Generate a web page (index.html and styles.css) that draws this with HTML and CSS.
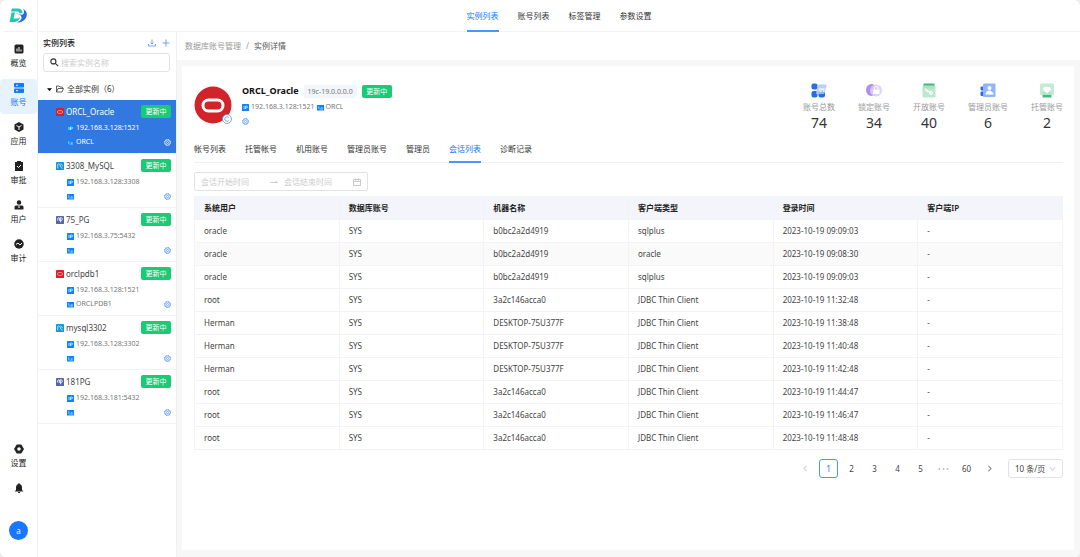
FILE: index.html
```html
<!DOCTYPE html>
<html lang="zh-CN">
<head>
  <meta charset="utf-8">
  <title>数据库账号管理</title>
  <link rel="stylesheet" href="styles.css">
</head>
<body>
<svg class="sprite" aria-hidden="true">
  <symbol id="i-ip" viewBox="0 0 14 14">
    <rect width="14" height="14" rx="1" fill="#0a84ff"/>
    <path d="M4 4v6M7 10V4h2.2a1.8 1.8 0 0 1 0 3.6H7" fill="none" stroke="#fff" stroke-width="1.4"/>
  </symbol>
  <symbol id="i-sid" viewBox="0 0 14 14">
    <path d="M0 2h14v11H0z" fill="#0a84ff"/>
    <path d="M2 5l2.5 2L2 9M5 10h7M8 7.5h3" fill="none" stroke="#fff" stroke-width="1.2"/>
  </symbol>
  <symbol id="i-gear" viewBox="0 0 14 14">
    <circle cx="7" cy="7" r="5.3" fill="none" stroke="currentColor" stroke-width="1.3"/>
    <circle cx="7" cy="7" r="6.2" fill="none" stroke="currentColor" stroke-width="1.5" stroke-dasharray="2.4 2.47"/>
    <circle cx="7" cy="7" r="2.2" fill="none" stroke="currentColor" stroke-width="1.3"/>
  </symbol>
  <symbol id="i-oracle" viewBox="0 0 14 14">
    <rect width="14" height="14" rx="1.5" fill="#d2232a"/>
    <rect x="2.5" y="4.5" width="9" height="5" rx="2.5" fill="none" stroke="#f4b6b8" stroke-width="1.2"/>
  </symbol>
  <symbol id="i-mysql" viewBox="0 0 14 14">
    <rect width="14" height="14" rx="1.5" fill="#1296db"/>
    <path d="M3 11V4c2-2 4 0 4.500 2.500S9 10 11.500 11M8 3.500c2 0 3 2 3 4" fill="none" stroke="#fff" stroke-width="1.2"/>
  </symbol>
  <symbol id="i-pg" viewBox="0 0 14 14">
    <rect width="14" height="14" rx="1.5" fill="#5467a5"/>
    <path d="M3 8V4.500C3 2.500 6 3 6 4v4.500M6 4c1-1.500 5-1.500 5 1 0 2-1 3-1.500 3H8M8 4v7" fill="none" stroke="#fff" stroke-width="1.5"/>
  </symbol>
</svg>

<div class="app">
  <nav class="sidebar">
    <a class="logo" href="#" aria-label="首页">
      <svg viewBox="0 0 38 32">
        <path d="M6 1h12c6 0 9 4 9 9l-6 1c-1-3-3-4-5-4H4z" fill="#28c5b4"/>
        <path d="M5 9h7l-3 12h6c3 0 5-1 7-3-1 7-6 10-13 10H1z" fill="#28c5b4"/>
        <path d="M14 11c6-1 8 4 13 2 4-2 4-7 1-11 7 3 9 9 7 15-3 8-10 12-19 12 6-3 9-6 9-10 0-5-5-6-11-8z" fill="#2b6de0"/>
      </svg>
    </a>
    <a class="nav-item" href="#">
      <svg viewBox="0 0 20 20"><rect x="1" y="1" width="18" height="18" rx="3"/><path class="cut" d="M6 9v6M10 6v9M14 11v4"/></svg>
      <span>概览</span>
    </a>
    <a class="nav-item active" href="#">
      <svg viewBox="0 0 20 20"><rect x="0" y="0" width="20" height="9" rx="1.5"/><rect x="0" y="11" width="20" height="9" rx="1.5"/><path class="cut" d="M4 4.500h4M4 15.500h4"/></svg>
      <span>账号</span>
    </a>
    <a class="nav-item" href="#">
      <svg viewBox="0 0 20 20"><path d="M10 0l9 5v10l-9 5-9-5V5z"/><path class="cut" d="M5 7l5 3 5-3M10 10v6"/></svg>
      <span>应用</span>
    </a>
    <a class="nav-item" href="#">
      <svg viewBox="0 0 20 20"><path d="M2 2h4V0h8v2h4v18H2z"/><path class="cut" d="M6 10l3 3 5-5"/></svg>
      <span>审批</span>
    </a>
    <a class="nav-item" href="#">
      <svg viewBox="0 0 20 20"><circle cx="10" cy="5" r="4.5"/><path d="M1 19v-5q0-3 3-3h12q3 0 3 3v5z"/><path class="cut" d="M10 11v5"/></svg>
      <span>用户</span>
    </a>
    <a class="nav-item" href="#">
      <svg viewBox="0 0 20 20"><circle cx="10" cy="10" r="9.5"/><path class="cut" d="M4 11l4-3 4 4 4-4"/></svg>
      <span>审计</span>
    </a>
    <div class="nav-bottom">
      <a class="nav-item" href="#">
        <svg viewBox="0 0 20 20"><path d="M5.500 1h9L20 10l-5.500 9h-9L0 10z"/><circle cx="10" cy="10" r="3.6" fill="#fff"/></svg>
        <span>设置</span>
      </a>
      <button class="bell" aria-label="通知">
        <svg viewBox="0 0 20 20"><path d="M9 0h2v2c4 1 5 4 5 7v5l3 3H1l3-3V9c0-3 1-6 5-7zM8 18h4v2H8z"/></svg>
      </button>
      <button class="avatar">a</button>
    </div>
  </nav>

  <div class="page">
    <header class="topbar">
      <a class="tab active" href="#">实例列表</a>
      <a class="tab" href="#">账号列表</a>
      <a class="tab" href="#">标签管理</a>
      <a class="tab" href="#">参数设置</a>
    </header>

    <div class="body">
      <aside class="tree">
        <div class="tree-head">
          <h2>实例列表</h2>
          <button aria-label="导出"><svg viewBox="0 0 16 16"><path d="M1 10v4h14v-4M8 1v9M5 7l3 3 3-3"/></svg></button>
          <button aria-label="新增"><svg viewBox="0 0 16 16"><path d="M8 1v14M1 8h14"/></svg></button>
        </div>
        <label class="search">
          <svg viewBox="0 0 16 16"><circle cx="6" cy="6" r="4.5"/><path d="M9.500 9.500l5 5"/></svg>
          <input type="text" placeholder="搜索实例名称" aria-label="搜索实例名称">
        </label>
        <div class="tree-root">
          <svg class="caret" viewBox="0 0 8 8"><path d="M0 2h8L4 6.500z"/></svg>
          <svg class="folder" viewBox="0 0 16 16"><path d="M1 14V2h5l2 2h5v3M1 14l3-7h11l-3 7z"/></svg>
          <span>全部实例（6）</span>
        </div>
        <ul class="instances">
          <li class="instance selected">
            <div class="row name"><svg><use href="#i-oracle"/></svg><a href="#">ORCL_Oracle</a><span class="badge">更新中</span></div>
            <div class="row sub"><svg><use href="#i-ip"/></svg>192.168.3.128:1521</div>
            <div class="row sub"><svg><use href="#i-sid"/></svg>ORCL<button class="gear" aria-label="设置"><svg><use href="#i-gear"/></svg></button></div>
          </li>
          <li class="instance">
            <div class="row name"><svg><use href="#i-mysql"/></svg><a href="#">3308_MySQL</a><span class="badge">更新中</span></div>
            <div class="row sub"><svg><use href="#i-ip"/></svg>192.168.3.128:3308</div>
            <div class="row sub"><svg><use href="#i-sid"/></svg><button class="gear" aria-label="设置"><svg><use href="#i-gear"/></svg></button></div>
          </li>
          <li class="instance">
            <div class="row name"><svg><use href="#i-pg"/></svg><a href="#">75_PG</a><span class="badge">更新中</span></div>
            <div class="row sub"><svg><use href="#i-ip"/></svg>192.168.3.75:5432</div>
            <div class="row sub"><svg><use href="#i-sid"/></svg><button class="gear" aria-label="设置"><svg><use href="#i-gear"/></svg></button></div>
          </li>
          <li class="instance">
            <div class="row name"><svg><use href="#i-oracle"/></svg><a href="#">orclpdb1</a><span class="badge">更新中</span></div>
            <div class="row sub"><svg><use href="#i-ip"/></svg>192.168.3.128:1521</div>
            <div class="row sub"><svg><use href="#i-sid"/></svg>ORCLPDB1<button class="gear" aria-label="设置"><svg><use href="#i-gear"/></svg></button></div>
          </li>
          <li class="instance">
            <div class="row name"><svg><use href="#i-mysql"/></svg><a href="#">mysql3302</a><span class="badge">更新中</span></div>
            <div class="row sub"><svg><use href="#i-ip"/></svg>192.168.3.128:3302</div>
            <div class="row sub"><svg><use href="#i-sid"/></svg><button class="gear" aria-label="设置"><svg><use href="#i-gear"/></svg></button></div>
          </li>
          <li class="instance">
            <div class="row name"><svg><use href="#i-pg"/></svg><a href="#">181PG</a><span class="badge">更新中</span></div>
            <div class="row sub"><svg><use href="#i-ip"/></svg>192.168.3.181:5432</div>
            <div class="row sub"><svg><use href="#i-sid"/></svg><button class="gear" aria-label="设置"><svg><use href="#i-gear"/></svg></button></div>
          </li>
        </ul>
      </aside>

      <main class="main">
        <div class="breadcrumb"><a href="#">数据库账号管理</a><span>/</span><span class="current">实例详情</span></div>

        <section class="card">
          <div class="detail">
            <div class="db-logo">
              <svg viewBox="0 0 38 38"><circle cx="19" cy="19" r="18.5" fill="#d2232a"/><rect x="9" y="14" width="20" height="11" rx="5.5" fill="none" stroke="#fff" stroke-width="3"/></svg>
              <svg class="mark" viewBox="0 0 20 20"><circle cx="10" cy="10" r="9" fill="#fff" stroke="#4a8af4" stroke-width="1.5"/><path d="M13.500 7A4.500 4.500 0 1 0 13.500 13" fill="none" stroke="#4a8af4" stroke-width="1.5"/></svg>
            </div>
            <div class="info">
              <div class="info-title"><h1>ORCL_Oracle</h1><span class="version">19c-19.0.0.0.0</span><span class="badge">更新中</span></div>
              <div class="info-sub"><svg><use href="#i-ip"/></svg><span>192.168.3.128:1521</span><svg><use href="#i-sid"/></svg><span>ORCL</span></div>
              <button class="gear" aria-label="设置"><svg><use href="#i-gear"/></svg></button>
            </div>
            <dl class="stats">
              <div>
                <svg viewBox="0 0 32 30"><rect x="1" y="1" width="12" height="12" rx="4" fill="#2b6de0"/><rect x="1" y="16" width="12" height="13" rx="4" fill="#2b6de0"/><rect x="15" y="16" width="13" height="13" rx="4" fill="#2b6de0"/><path d="M13 3h17q2 0 1 3l-4 14q-1 2-3 2H10z" fill="#a9c8fa" opacity=".85"/><path d="M15 12h12M17 16h4M24 16h3" stroke="#fff" stroke-width="2.5"/></svg>
                <dt>账号总数</dt><dd>74</dd>
              </div>
              <div>
                <svg viewBox="0 0 32 30"><ellipse cx="11" cy="14" rx="11" ry="12" fill="#b28df0"/><circle cx="20" cy="15" r="12" fill="#dccdfb" opacity=".9"/><rect x="14" y="13" width="13" height="9" rx="1" fill="#fff"/><path d="M17 13v-3a3.500 3.500 0 0 1 7 0v3" fill="none" stroke="#fff" stroke-width="2"/></svg>
                <dt>锁定账号</dt><dd>34</dd>
              </div>
              <div>
                <svg viewBox="0 0 32 30"><rect x="5" y="1" width="22" height="10" rx="1" fill="#45b97c"/><rect x="3" y="5" width="26" height="24" rx="3" fill="#b4e6ca" opacity=".9"/><path d="M10 11a5 5 0 0 0 6 6l4 5" fill="none" stroke="#fff" stroke-width="3"/><circle cx="20" cy="20" r="3" fill="none" stroke="#fff" stroke-width="2"/></svg>
                <dt>开放账号</dt><dd>40</dd>
              </div>
              <div>
                <svg viewBox="0 0 32 30"><rect x="1" y="7" width="9" height="8" rx="2" fill="#2b6de0"/><rect x="1" y="17" width="9" height="9" rx="2" fill="#2b6de0"/><rect x="6" y="1" width="25" height="27" rx="2" fill="#8eb6f8"/><circle cx="19" cy="10" r="4" fill="#fff"/><path d="M11 22q1-7 8-7 4 0 5 3l3 2v3H11z" fill="#fff"/></svg>
                <dt>管理员账号</dt><dd>6</dd>
              </div>
              <div>
                <svg viewBox="0 0 32 30"><rect x="7" y="18" width="18" height="11" rx="1" fill="#45b97c"/><rect x="2" y="1" width="28" height="23" rx="3" fill="#bde9d0" opacity=".9"/><path d="M11 8h10l4 4-9 9-9-9z" fill="#fff"/></svg>
                <dt>托管账号</dt><dd>2</dd>
              </div>
            </dl>
          </div>

          <nav class="tabs">
            <a class="tab" href="#">帐号列表</a>
            <a class="tab" href="#">托管帐号</a>
            <a class="tab" href="#">机用账号</a>
            <a class="tab" href="#">管理员账号</a>
            <a class="tab" href="#">管理员</a>
            <a class="tab active" href="#">会话列表</a>
            <a class="tab" href="#">诊断记录</a>
          </nav>

          <div class="range">
            <input type="text" placeholder="会话开始时间" aria-label="会话开始时间">
            <svg class="arrow" viewBox="0 0 16 16"><path d="M1 9h14l-4-3"/></svg>
            <input type="text" placeholder="会话结束时间" aria-label="会话结束时间">
            <svg viewBox="0 0 16 16"><path d="M1 3h14v12H1zM1 7h14M5 1v4M11 1v4"/></svg>
          </div>

          <table class="sessions">
            <thead>
              <tr><th>系统用户</th><th>数据库账号</th><th>机器名称</th><th>客户端类型</th><th>登录时间</th><th>客户端IP</th></tr>
            </thead>
            <tbody>
              <tr><td>oracle</td><td>SYS</td><td>b0bc2a2d4919</td><td>sqlplus</td><td>2023-10-19 09:09:03</td><td>-</td></tr>
              <tr class="hover"><td>oracle</td><td>SYS</td><td>b0bc2a2d4919</td><td>oracle</td><td>2023-10-19 09:08:30</td><td>-</td></tr>
              <tr><td>oracle</td><td>SYS</td><td>b0bc2a2d4919</td><td>sqlplus</td><td>2023-10-19 09:09:03</td><td>-</td></tr>
              <tr><td>root</td><td>SYS</td><td>3a2c146acca0</td><td>JDBC Thin Client</td><td>2023-10-19 11:32:48</td><td>-</td></tr>
              <tr><td>Herman</td><td>SYS</td><td>DESKTOP-75U377F</td><td>JDBC Thin Client</td><td>2023-10-19 11:38:48</td><td>-</td></tr>
              <tr><td>Herman</td><td>SYS</td><td>DESKTOP-75U377F</td><td>JDBC Thin Client</td><td>2023-10-19 11:40:48</td><td>-</td></tr>
              <tr><td>Herman</td><td>SYS</td><td>DESKTOP-75U377F</td><td>JDBC Thin Client</td><td>2023-10-19 11:42:48</td><td>-</td></tr>
              <tr><td>root</td><td>SYS</td><td>3a2c146acca0</td><td>JDBC Thin Client</td><td>2023-10-19 11:44:47</td><td>-</td></tr>
              <tr><td>root</td><td>SYS</td><td>3a2c146acca0</td><td>JDBC Thin Client</td><td>2023-10-19 11:46:47</td><td>-</td></tr>
              <tr><td>root</td><td>SYS</td><td>3a2c146acca0</td><td>JDBC Thin Client</td><td>2023-10-19 11:48:48</td><td>-</td></tr>
            </tbody>
          </table>

          <div class="pagination">
            <button class="muted" aria-label="上一页"><svg viewBox="0 0 16 16"><path d="M11 2L4 8l7 6"/></svg></button>
            <button class="current">1</button>
            <button>2</button>
            <button>3</button>
            <button>4</button>
            <button>5</button>
            <button class="muted" aria-label="更多页"><svg class="dots" viewBox="0 0 24 8"><circle cx="3" cy="4" r="2"/><circle cx="12" cy="4" r="2"/><circle cx="21" cy="4" r="2"/></svg></button>
            <button>60</button>
            <button aria-label="下一页"><svg viewBox="0 0 16 16"><path d="M5 2l7 6-7 6"/></svg></button>
            <label class="page-size">
              <select aria-label="每页条数"><option>10 条/页</option><option>20 条/页</option></select>
              <svg viewBox="0 0 16 16"><path d="M2 5l6 7 6-7"/></svg>
            </label>
          </div>
        </section>
      </main>
    </div>
  </div>
</div>
</body>
</html>
```

FILE: styles.css
```css
* {
  box-sizing: border-box;
}

body {
  margin: 0;
  background: #ececec;
  color: #444;
  font: 8px/12px "Noto Sans", "Noto Sans CJK SC", sans-serif;
}

a {
  color: inherit;
  text-decoration: none;
}

button, input, select {
  margin: 0;
  padding: 0;
  border: 0;
  background: none;
  color: inherit;
  font: inherit;
}

button {
  display: flex;
  align-items: center;
  justify-content: center;
}

h1, h2, ul, dl, dd {
  margin: 0;
  padding: 0;
}

svg {
  display: block;
  flex: none;
}

.sprite {
  position: absolute;
  width: 0;
  height: 0;
}

.app {
  display: flex;
  min-height: 100vh;
  border-radius: 6px;
  overflow: hidden;
  background: #fff;
}

/* left navigation */
.sidebar {
  display: flex;
  flex-direction: column;
  gap: 4px;
  flex: none;
  width: 38px;
  border-right: 1px solid #f0f0f2;
}

.logo {
  display: flex;
  align-items: center;
  justify-content: center;
  height: 32px;
  margin: 0 4px 4px;
  border-bottom: 1px solid #f0f0f2;
}

.logo svg {
  width: 19px;
  height: 16px;
}

.nav-item {
  display: flex;
  flex-direction: column;
  align-items: center;
  gap: 3px;
  height: 35px;
  padding-top: 4px;
  border-radius: 4px;
  color: #222;
}

.nav-item svg, .bell svg {
  width: 10px;
  height: 10px;
  fill: currentColor;
}

.nav-item .cut {
  fill: none;
  stroke: #fff;
  stroke-width: 2;
}

.nav-item.active {
  background: #e6f3ff;
  color: #1677ff;
}

.nav-bottom {
  display: flex;
  flex-direction: column;
  gap: 4px;
  margin-top: auto;
  padding-bottom: 17px;
}

.bell {
  height: 18px;
  color: #222;
}

.avatar {
  width: 19px;
  height: 19px;
  margin: 20px auto 0;
  border-radius: 50%;
  background: #1677ff;
  color: #fff;
}

/* top tabs */
.page {
  display: flex;
  flex-direction: column;
  flex: 1;
  min-width: 0;
}

.topbar {
  display: flex;
  justify-content: center;
  gap: 19px;
  height: 32px;
  border-bottom: 1px solid #f3f3f5;
}

.tab {
  color: #333;
}

.tab.active {
  border-bottom: 2px solid #4a96ff;
  color: #1677ff;
}

.topbar .tab {
  height: 32px;
  line-height: 32px;
}

.body {
  display: flex;
  flex: 1;
}

/* instance tree */
.tree {
  flex: none;
  width: 139px;
  border-right: 1px solid #f0f0f2;
}

.tree-head {
  display: flex;
  align-items: center;
  gap: 6px;
  height: 21px;
  padding: 0 6px 0 5px;
}

.tree-head h2 {
  flex: 1;
  color: #222;
  font-size: 8px;
  font-weight: 500;
}

.tree-head svg {
  width: 8px;
  height: 8px;
  fill: none;
  stroke: #4a8af4;
  stroke-width: 1.5;
}

.search {
  display: flex;
  align-items: center;
  gap: 2px;
  height: 19px;
  margin: 0 6px 0 5px;
  padding: 0 6px;
  border: 1px solid #e2e2e4;
  border-radius: 3px;
}

.search svg {
  width: 9px;
  height: 9px;
  fill: none;
  stroke: #333;
  stroke-width: 2;
}

input::placeholder {
  color: #ccc;
  opacity: 1;
}

.search input {
  flex: 1;
  min-width: 0;
}

.tree-root {
  display: flex;
  align-items: center;
  height: 28px;
  padding: 6px 0 0 9px;
  color: #333;
}

.caret {
  width: 5px;
  height: 5px;
  margin-right: 4px;
}

.folder {
  width: 8px;
  height: 8px;
  margin-right: 3px;
  fill: none;
  stroke: #333;
  stroke-width: 1.5;
}

.instances {
  list-style: none;
}

.instance {
  display: flex;
  flex-direction: column;
  padding: 5px 5px 4px 18px;
  border-bottom: 1px solid #f3f3f5;
}

.row {
  display: flex;
  align-items: center;
  height: 14px;
}

.name {
  gap: 2px;
  height: 13px;
  margin-bottom: 3px;
}

.name svg {
  width: 8px;
  height: 8px;
}

.name a {
  flex: 1;
}

.sub {
  gap: 2px;
  padding-left: 11px;
  color: #777;
  font-size: 7px;
}

.sub svg, .info-sub svg, .gear svg {
  width: 7px;
  height: 7px;
}

.gear {
  color: #4a8af4;
}

.sub .gear {
  margin-left: auto;
}

.instance.selected {
  background: #3178e0;
}

.selected .row, .selected .gear {
  color: #fff;
}

.badge {
  min-width: 30px;
  border-radius: 2px;
  background: #1acb75;
  color: #fff;
  font-size: 7px;
  line-height: 13px;
  text-align: center;
}

/* detail page */
.main {
  display: flex;
  flex-direction: column;
  flex: 1;
  min-width: 0;
  background: #f7f7f7;
}

.breadcrumb {
  display: flex;
  gap: 5px;
  padding: 8px;
  background: #fff;
  color: #999;
}

.breadcrumb .current {
  color: #555;
}

.card {
  flex: 1;
  margin: 6px 6px 7px 5px;
  padding: 17px 11px 17px 12px;
  background: #fff;
}

.detail {
  display: flex;
}

.db-logo {
  position: relative;
  width: 38px;
  height: 38px;
  margin: 3px 10px 0 0;
}

.db-logo .mark {
  position: absolute;
  right: 0;
  bottom: 0;
  width: 10px;
  height: 10px;
}

.info {
  display: flex;
  flex-direction: column;
  align-items: flex-start;
  gap: 3px;
  padding-top: 1px;
}

.info-title {
  display: flex;
  align-items: center;
  gap: 5px;
}

.info-title h1 {
  color: #111;
  font-size: 9px;
  line-height: 14px;
}

.version {
  padding: 0 4px;
  border-radius: 2px;
  background: #f2f5fa;
  color: #777;
  font-size: 7px;
  line-height: 13px;
}

.info-sub {
  display: flex;
  align-items: center;
  gap: 2px;
  color: #777;
  font-size: 7px;
}

.info .gear {
  height: 10px;
}

.stats {
  display: flex;
  gap: 23px;
  margin-left: auto;
}

.stats div {
  display: flex;
  flex-direction: column;
  align-items: center;
}

.stats svg {
  width: 16px;
  height: 15px;
}

.stats dt {
  margin-top: 3px;
  color: #999;
}

.stats dd {
  color: #333;
  font-size: 14px;
  line-height: 19px;
}

.tabs {
  display: flex;
  gap: 19px;
  height: 23px;
  margin-top: 8px;
  border-bottom: 1px solid #f0f0f2;
}

.tabs .tab {
  height: 23px;
  line-height: 18px;
}

.range {
  display: flex;
  align-items: center;
  width: 174px;
  height: 19px;
  margin: 9px 0 5px;
  padding: 0 6px;
  border: 1px solid #e2e2e4;
  border-radius: 2px;
}

.range input {
  flex: 1;
  min-width: 0;
}

.range svg {
  width: 8px;
  height: 8px;
  fill: none;
  stroke: #b8b8bc;
  stroke-width: 1.5;
}

.range .arrow {
  margin-right: 6px;
}

.sessions {
  width: 100%;
  table-layout: fixed;
  border-collapse: separate;
  border-spacing: 0;
  border-left: 1px solid #f3f3f5;
}

.sessions th, .sessions td {
  height: 23px;
  padding: 0 9px;
  border-right: 1px solid #f3f3f5;
  border-bottom: 1px solid #f3f3f5;
  text-align: left;
}

.sessions th {
  height: 24px;
  background: #f3f5fa;
  color: #222;
  font-weight: 600;
}

.sessions .hover {
  background: #fafafa;
}

.pagination {
  display: flex;
  justify-content: flex-end;
  gap: 4px;
  margin-top: 9px;
}

.pagination button {
  width: 19px;
  height: 19px;
  border-radius: 3px;
}

.pagination svg {
  width: 7px;
  height: 7px;
  fill: none;
  stroke: currentColor;
  stroke-width: 2;
}

.pagination .dots {
  width: 11px;
  height: 4px;
  fill: currentColor;
  stroke: none;
}

.pagination .muted {
  color: #bbb;
}

.pagination .current {
  border: 1px solid #4a96ff;
  color: #1677ff;
}

.page-size {
  display: flex;
  align-items: center;
  width: 55px;
  height: 19px;
  margin-left: 5px;
  padding: 0 6px;
  border: 1px solid #e2e2e4;
  border-radius: 3px;
}

.page-size select {
  flex: 1;
  min-width: 0;
  appearance: none;
}

.page-size svg {
  color: #bbb;
}
```
